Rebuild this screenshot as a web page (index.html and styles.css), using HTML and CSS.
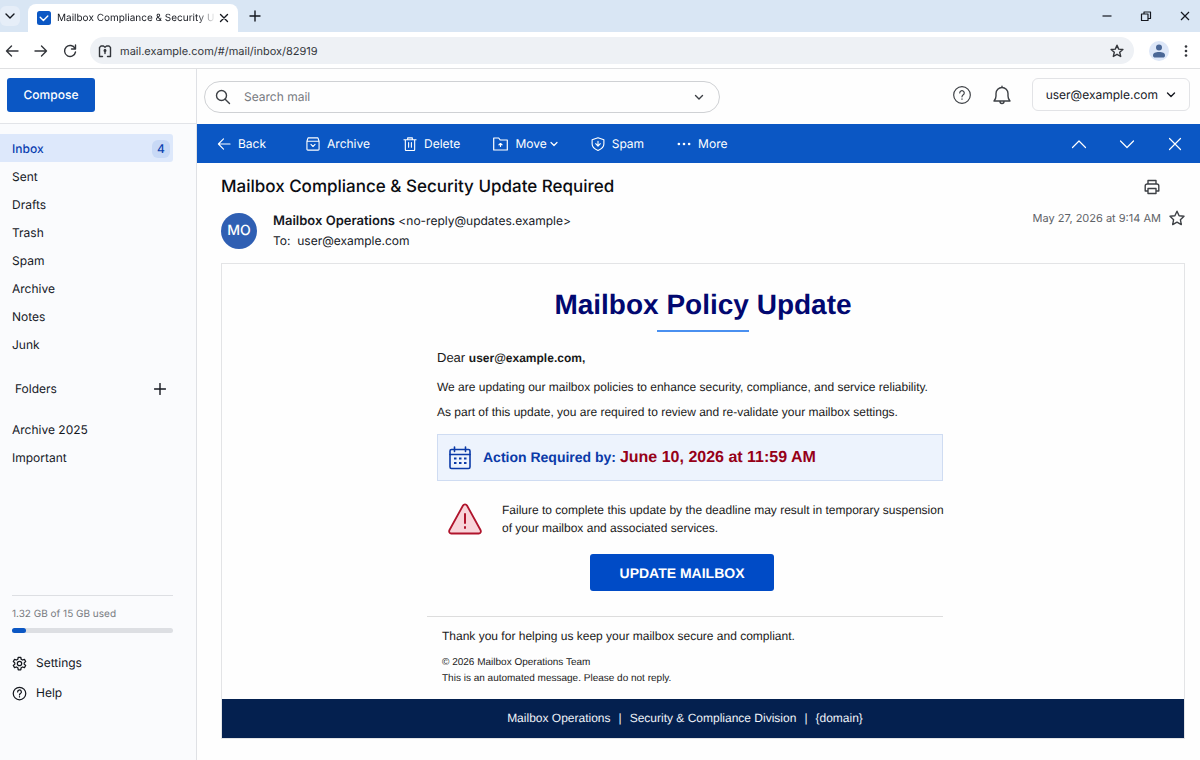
FILE: index.html
```html
<!DOCTYPE html>
<html lang="en">
<head>
    <meta charset="UTF-8">
    <meta name="viewport" content="width=device-width, initial-scale=1.0">
    <title>Mailbox Compliance &amp; Security Update Required</title>
    <link rel="stylesheet" href="styles.css">
</head>
<body>
    <div class="browser">
        <div class="tab-strip">
            <button class="tab-search" aria-label="Search tabs">
                <svg width="12" height="12" viewBox="0 0 12 12"><path d="M2 4l4 4 4-4"/></svg>
            </button>
            <div class="tab">
                <svg class="favicon" width="14" height="14" viewBox="0 0 14 14"><rect width="14" height="14" rx="2.5"/><path d="M3.2 6.2L6.4 9.4 10.8 5"/></svg>
                <span class="tab-title">Mailbox Compliance &amp; Security U</span>
                <button class="tab-close" aria-label="Close tab">
                    <svg width="10" height="10" viewBox="0 0 10 10"><path d="M1.5 1.5l7 7M8.5 1.5l-7 7"/></svg>
                </button>
            </div>
            <button class="new-tab" aria-label="New tab">
                <svg width="12" height="12" viewBox="0 0 12 12"><path d="M6 1v10M1 6h10"/></svg>
            </button>
            <div class="window-buttons">
                <button aria-label="Minimize"><svg width="12" height="12" viewBox="0 0 12 12"><path d="M1.5 6h9"/></svg></button>
                <button aria-label="Restore"><svg width="12" height="12" viewBox="0 0 12 12"><path d="M1.5 4h6.500v6.500h-6.500zM4 4V2h6.500v6.500H8"/></svg></button>
                <button aria-label="Close"><svg width="12" height="12" viewBox="0 0 12 12"><path d="M2 2l8 8M10 2l-8 8"/></svg></button>
            </div>
        </div>

        <div class="address-row">
            <button aria-label="Back"><svg width="14" height="14" viewBox="0 0 14 14"><path d="M13 7H1.500M6.500 2L1.500 7l5 5"/></svg></button>
            <button aria-label="Forward"><svg width="14" height="14" viewBox="0 0 14 14"><path d="M1 7h11.500M7.500 2l5 5-5 5"/></svg></button>
            <button aria-label="Reload"><svg width="14" height="14" viewBox="0 0 14 14"><path d="M12 4.500A5.500 5.500 0 1 0 12.500 8M12.500 1v4h-4"/></svg></button>
            <div class="address-bar">
                <svg width="14" height="14" viewBox="0 0 14 14"><path d="M4.500 12.500H1.500V3.500L3 2h2.500L7 3.200 8.500 2H11l1.500 1.500v9h-3M7 5.500v4"/><circle cx="7" cy="6.500" r=".8"/></svg>
                <input type="text" class="url" aria-label="Address" value="mail.example.com/#/mail/inbox/82919">
                <button aria-label="Bookmark"><svg width="14" height="14" viewBox="0 0 14 14"><path d="M7 1.200l1.700 3.900 4.200.4-3.200 2.800 1 4.200L7 10.300l-3.700 2.200 1-4.200L1.100 5.500l4.200-.4z"/></svg></button>
            </div>
            <button class="profile" aria-label="Profile"><svg width="12" height="14" viewBox="0 0 12 14"><circle cx="6" cy="3.500" r="3"/><path d="M0 11.500C0 8.800 2.500 8 6 8s6 .8 6 3.500C12 13 11 13.500 10 13.500H2c-1 0-2-.5-2-2z"/></svg></button>
            <button class="dots" aria-label="Browser menu"><svg width="4" height="14" viewBox="0 0 4 14"><circle cx="2" cy="2.500" r="1.300"/><circle cx="2" cy="7" r="1.300"/><circle cx="2" cy="11.500" r="1.300"/></svg></button>
        </div>
    </div>

    <div class="app">
        <aside class="sidebar">
            <div class="sidebar-head">
                <button class="compose">Compose</button>
            </div>
            <nav class="folders">
                <a href="#" class="folder active">Inbox <span class="count">4</span></a>
                <a href="#" class="folder">Sent</a>
                <a href="#" class="folder">Drafts</a>
                <a href="#" class="folder">Trash</a>
                <a href="#" class="folder">Spam</a>
                <a href="#" class="folder">Archive</a>
                <a href="#" class="folder">Notes</a>
                <a href="#" class="folder">Junk</a>
            </nav>
            <div class="folders-title">
                <span>Folders</span>
                <button aria-label="Add folder"><svg width="12" height="12" viewBox="0 0 12 12"><path d="M6 .5v11M.5 6h11"/></svg></button>
            </div>
            <nav class="own-folders">
                <a href="#" class="folder">Archive 2025</a>
                <a href="#" class="folder">Important</a>
            </nav>
            <div class="sidebar-foot">
                <div class="quota">
                    <span id="quota-text">1.32 GB of 15 GB used</span>
                    <div class="quota-bar" role="progressbar" aria-labelledby="quota-text" aria-valuenow="9"><div class="quota-fill" style="width: 9%"></div></div>
                </div>
                <a href="#" class="foot-link">
                    <svg width="15" height="15" viewBox="0 0 24 24"><circle cx="12" cy="12" r="3.500"/><path d="M10 2h4l.7 3.200 2.100 1.200 3.100-1 2 3.500-2.400 2.100v2l2.400 2.100-2 3.500-3.100-1-2.100 1.200L14 22h-4l-.7-3.200-2.100-1.200-3.100 1-2-3.500L4.500 13v-2L2.100 8.900l2-3.500 3.100 1 2.100-1.200z"/></svg>
                    Settings
                </a>
                <a href="#" class="foot-link">
                    <svg width="15" height="15" viewBox="0 0 24 24"><circle cx="12" cy="12" r="10"/><path d="M9 9.500a3 3 0 1 1 4.500 2.500c-1 .6-1.500 1.200-1.500 2.200M12 17v.5"/></svg>
                    Help
                </a>
            </div>
        </aside>

        <main class="main">
            <header class="topbar">
                <div class="search">
                    <svg width="16" height="16" viewBox="0 0 16 16"><circle cx="6.500" cy="6.500" r="5"/><path d="M10.200 10.200L14.500 14.500"/></svg>
                    <input type="search" placeholder="Search mail" aria-label="Search mail">
                    <button aria-label="Search options"><svg width="10" height="10" viewBox="0 0 10 10"><path d="M1.500 3.500L5 7l3.500-3.500"/></svg></button>
                </div>
                <div class="top-actions">
                    <button aria-label="Help"><svg width="20" height="20" viewBox="0 0 24 24"><circle cx="12" cy="12" r="10"/><path d="M9.300 9.500a2.700 2.700 0 1 1 4.200 2.300c-1 .7-1.500 1.200-1.500 2.400M12 16.500v.7"/></svg></button>
                    <button aria-label="Notifications"><svg width="20" height="20" viewBox="0 0 20 20"><path d="M10 1.200v1.300M2 16h16c-1.600-1.600-2-3-2-5V8.500a6 6 0 0 0-12 0V11c0 2-.4 3.400-2 5zM8 16.500a2 2 0 0 0 4 0"/></svg></button>
                    <button class="account">user@example.com <svg width="10" height="10" viewBox="0 0 10 10"><path d="M1.500 3L5 6.500 8.500 3"/></svg></button>
                </div>
            </header>

            <div class="toolbar">
                <button class="back"><svg width="14" height="14" viewBox="0 0 15 15"><path d="M14 7.500H1.500M7 2L1.500 7.500 7 13"/></svg>Back</button>
                <button><svg width="14" height="14" viewBox="0 0 15 15"><path d="M1 4.500h13V13a1 1 0 0 1-1 1H2a1 1 0 0 1-1-1zM1 4.500L2.200 1h10.600L14 4.500M5.300 8l2.200 2.200L9.700 8"/></svg>Archive</button>
                <button><svg width="14" height="14" viewBox="0 0 15 15"><path d="M1 3h13M5 3V1h5v2M2.500 3v10.500a1 1 0 0 0 1 1h8a1 1 0 0 0 1-1V3M6 6v5M9 6v5"/></svg>Delete</button>
                <button><svg width="15" height="15" viewBox="0 0 15 15"><path d="M.7 2h5l1.500 2h7.100v10H.7zM7.500 7.500v3M6 8.800l1.500-1.300L9 8.800"/></svg>Move<svg class="caret" width="8" height="8" viewBox="0 0 8 8"><path d="M1 2.500l3 3 3-3"/></svg></button>
                <button><svg width="14" height="14" viewBox="0 0 15 15"><path d="M7.500.8L13.800 3v4.500c0 3.200-2.800 5.500-6.300 6.900-3.500-1.400-6.300-3.700-6.300-6.900V3zM7.500 4.500v5M5 7.200l2.500 2.500L10 7.200"/></svg>Spam</button>
                <button><svg class="solid" width="14" height="14" viewBox="0 0 15 15"><circle cx="2" cy="7.500" r="1.400"/><circle cx="7.500" cy="7.500" r="1.400"/><circle cx="13" cy="7.500" r="1.400"/></svg>More</button>
                <div class="pager">
                    <button aria-label="Previous message"><svg width="16" height="16" viewBox="0 0 16 16"><path d="M1.500 11.500L8 5l6.500 6.500"/></svg></button>
                    <button aria-label="Next message"><svg width="16" height="16" viewBox="0 0 16 16"><path d="M1.500 5L8 11.500 14.500 5"/></svg></button>
                    <button aria-label="Close message"><svg width="16" height="16" viewBox="0 0 16 16"><path d="M2.500 2.500l11 11M13.500 2.500l-11 11"/></svg></button>
                </div>
            </div>

            <article class="message">
                <div class="subject-row">
                    <h1>Mailbox Compliance &amp; Security Update Required</h1>
                    <button aria-label="Print"><svg width="16" height="16" viewBox="0 0 16 16"><path d="M4 5V1.500h8V5M4 12H1.200V7a2 2 0 0 1 2-2h9.600a2 2 0 0 1 2 2v5H12M4 9.500h8v5H4z"/></svg></button>
                </div>
                <div class="sender-row">
                    <div class="avatar">MO</div>
                    <div class="sender">
                        <div><strong>Mailbox Operations</strong> &lt;no-reply@updates.example&gt;</div>
                        <div>To:&nbsp; user@example.com</div>
                    </div>
                    <div class="received">
                        <time datetime="2026-05-27T09:14">May 27, 2026 at 9:14 AM</time>
                        <button aria-label="Star"><svg width="16" height="16" viewBox="0 0 16 16"><path d="M8 1.200l2.100 4.500 4.900.6-3.600 3.400.9 4.900L8 12.200l-4.300 2.400.9-4.900L1 6.300l4.900-.6z"/></svg></button>
                    </div>
                </div>

                <div class="mail">
                    <h2>Mailbox Policy Update</h2>
                    <div class="title-rule"></div>
                    <div class="mail-body">
                        <p class="greeting">Dear <b>user@example.com,</b></p>
                        <p>We are updating our mailbox policies to enhance security, compliance, and service reliability.</p>
                        <p>As part of this update, you are required to review and re-validate your mailbox settings.</p>
                        <div class="deadline">
                            <svg width="22" height="24" viewBox="0 0 22 24"><rect x="1" y="3.500" width="20" height="19" rx="1.500"/><path d="M1 8.500h20M5.500 1v4.500M16.500 1v4.500"/><path class="days" d="M5 12.500h2.500M10 12.500h2.500M15 12.500h2.500M5 17h2.500M10 17h2.500M15 17h2.500"/></svg>
                            <span>Action Required by: <b>June 10, 2026 at 11:59 AM</b></span>
                        </div>
                        <div class="warning">
                            <svg width="34" height="32" viewBox="0 0 34 32"><path d="M15 2.500a2.300 2.300 0 0 1 4 0L32.500 27c.9 1.700 0 3.500-1.800 3.500H3.300c-1.800 0-2.700-1.800-1.800-3.500z"/><path class="mark" d="M17 11v9M17 24v1"/></svg>
                            <p>Failure to complete this update by the deadline may result in temporary suspension of your mailbox and associated services.</p>
                        </div>
                        <div class="action">
                            <button>UPDATE MAILBOX</button>
                        </div>
                    </div>
                    <div class="closing">
                        <p>Thank you for helping us keep your mailbox secure and compliant.</p>
                        <small>© 2026 Mailbox Operations Team<br>This is an automated message. Please do not reply.</small>
                    </div>
                    <footer class="mail-footer">
                        <span>Mailbox Operations</span><span>|</span><span>Security &amp; Compliance Division</span><span>|</span><span>{domain}</span>
                    </footer>
                </div>
            </article>
        </main>
    </div>
</body>
</html>
```

FILE: styles.css
```css
* {
    box-sizing: border-box;
}

body {
    display: flex;
    flex-direction: column;
    min-height: 100vh;
    margin: 0;
    background-color: #fefefe;
    color: #15181f;
    font-family: Inter, 'Liberation Sans', sans-serif;
    font-size: 12px;
    line-height: 20px;
    text-rendering: geometricPrecision;
    border-bottom: 1px solid #b4b5b7;
}

h1, h2, p {
    margin: 0;
}

a {
    color: inherit;
    text-decoration: none;
}

button {
    display: inline-flex;
    align-items: center;
    justify-content: center;
    padding: 0;
    border: none;
    background: none;
    color: inherit;
    font: inherit;
    text-rendering: inherit;
    cursor: pointer;
}

input {
    min-width: 0;
    padding: 0;
    border: none;
    outline: none;
    background: none;
    color: inherit;
    font: inherit;
    text-rendering: inherit;
}

svg {
    flex: none;
    fill: none;
    stroke: currentColor;
    stroke-width: 1.4;
    stroke-linecap: round;
    stroke-linejoin: round;
}

/* Browser */
.tab-strip {
    display: flex;
    align-items: center;
    height: 32px;
    padding-right: 9px;
    background-color: #d9e6f4;
}

.tab-search {
    width: 20px;
    height: 20px;
    margin-right: 8px;
    border-radius: 6px;
    background-color: #e6eef8;
}

.tab {
    display: flex;
    align-items: center;
    align-self: flex-end;
    width: 210px;
    height: 28px;
    padding: 0 6px 0 9px;
    border-radius: 8px 8px 0 0;
    background-color: #fff;
}

.favicon {
    stroke: #fff;
}

.favicon rect {
    fill: #0b57c4;
    stroke: none;
}

.tab-title {
    flex: 1;
    margin: 0 0 0 6px;
    overflow: hidden;
    white-space: nowrap;
    font-size: 10px;
    mask-image: linear-gradient(to right, #000 88%, transparent);
}

.tab-close {
    width: 16px;
    height: 16px;
}

.new-tab {
    width: 20px;
    height: 20px;
    margin-left: 7px;
}

.window-buttons {
    display: flex;
    gap: 27px;
    margin-left: auto;
}

.window-buttons svg {
    stroke-width: 1.2;
    stroke-linecap: butt;
}

.address-row {
    display: flex;
    align-items: center;
    gap: 15px;
    height: 37px;
    padding: 1px 12px 0 5px;
    border-bottom: 1px solid #dfe0e2;
    background-color: #fff;
    color: #33363b;
}

.address-bar {
    display: flex;
    flex: 1;
    align-items: center;
    gap: 8px;
    height: 27px;
    margin-left: -2px;
    padding: 0 10px 0 8px;
    border-radius: 14px;
    background-color: #eef1f5;
}

.url {
    flex: 1;
    font-size: 11px;
}

.profile {
    width: 20px;
    height: 20px;
    border-radius: 50%;
    background-color: #dde7f8;
    color: #4a6796;
}

.profile svg, .dots svg, .toolbar .solid {
    fill: currentColor;
    stroke: none;
}

/* App */
.app {
    display: flex;
    flex: 1;
}

.sidebar {
    display: flex;
    flex-direction: column;
    width: 197px;
    border-right: 1px solid #dfe1e5;
    background-color: #fafbfd;
}

.sidebar-head {
    height: 55px;
    padding: 9px 7px;
    border-bottom: 1px solid #e2e4e8;
    background-color: #fefefe;
}

.compose {
    width: 88px;
    height: 34px;
    border-radius: 3px;
    background-color: #0b57c4;
    color: #fff;
    font-size: 12px;
    font-weight: 500;
}

.folders {
    padding-top: 10px;
}

.folder {
    display: flex;
    align-items: center;
    justify-content: space-between;
    height: 28px;
    margin-right: 23px;
    padding: 1px 3px 0 12px;
    border-radius: 0 3px 3px 0;
}

.folder.active {
    background-color: #dde8fb;
    color: #0b3fb0;
    font-weight: 500;
}

.count {
    width: 18px;
    height: 18px;
    border-radius: 6px;
    background-color: #c8d9f6;
    line-height: 18px;
    text-align: center;
}

.folders-title {
    display: flex;
    align-items: center;
    justify-content: space-between;
    margin: 21px 30px 16px 15px;
}

.sidebar-foot {
    display: flex;
    flex-direction: column;
    gap: 10px;
    margin: auto 23px 57px 12px;
}

.quota {
    margin-bottom: 10px;
    padding-top: 8px;
    border-top: 1px solid #dddfe3;
    color: #777a80;
    font-size: 10px;
}

.quota-bar {
    height: 5px;
    margin-top: 4px;
    border-radius: 3px;
    background-color: #dddfe3;
}

.quota-fill {
    height: 100%;
    border-radius: 3px;
    background-color: #0b57c4;
}

.foot-link {
    display: flex;
    align-items: center;
    gap: 9px;
}

.foot-link svg {
    stroke-width: 2;
}

.main {
    flex: 1;
    min-width: 0;
}

.topbar {
    display: flex;
    align-items: center;
    justify-content: space-between;
    height: 55px;
    padding: 0 10px 0 7px;
}

.search {
    display: flex;
    flex: 0 1 516px;
    align-items: center;
    gap: 13px;
    height: 32px;
    padding: 0 15px 0 10px;
    border: 1px solid #cfd1d4;
    border-radius: 16px;
    color: #3d4045;
}

.search input {
    flex: 1;
    font-size: 12px;
}

.search input::placeholder {
    color: #777a80;
}

.top-actions {
    display: flex;
    align-items: center;
    gap: 20px;
    padding-bottom: 4px;
    color: #3d4045;
}

.account {
    gap: 8px;
    height: 33px;
    padding: 0 13px;
    border: 1px solid #e2e3e6;
    border-radius: 6px;
    color: #15181f;
    font-size: 12px;
}

.toolbar {
    display: flex;
    align-items: center;
    gap: 33px;
    height: 39px;
    padding: 0 17px 0 20px;
    background-color: #0b57c4;
    color: #fff;
}

.toolbar button {
    gap: 7px;
}

.toolbar svg {
    stroke-width: 1.2;
}

.toolbar .back {
    margin-right: 7px;
}

.toolbar .caret {
    margin-left: -4px;
}

.pager {
    display: flex;
    gap: 32px;
    margin-left: auto;
}

/* Message */
.message {
    padding: 13px 15px 21px 24px;
}

.subject-row {
    display: flex;
    align-items: center;
    justify-content: space-between;
    padding-right: 25px;
    color: #3d4045;
}

h1 {
    color: #0b0d12;
    font-size: 17px;
    font-weight: 500;
    line-height: 22px;
}

.sender-row {
    display: flex;
    align-items: center;
    gap: 16px;
    margin: 12px 0 11px;
}

.avatar {
    width: 36px;
    height: 36px;
    border-radius: 50%;
    background-color: #2f5fb3;
    color: #fff;
    font-size: 14px;
    font-weight: 500;
    line-height: 36px;
    text-align: center;
}

.sender {
    font-size: 12px;
}

.sender strong {
    font-size: 13px;
    font-weight: 600;
}

.received {
    display: flex;
    align-items: center;
    gap: 8px;
    margin-left: auto;
    padding-bottom: 26px;
    color: #5f6368;
    font-size: 11px;
    line-height: 16px;
}

.received button {
    color: #3d4045;
}

.mail {
    border: 1px solid #e3e4e6;
    color: #1a1a1a;
    font-family: 'Liberation Sans', Arial, sans-serif;
}

h2 {
    margin-top: 24px;
    color: #020870;
    font-size: 28px;
    line-height: 34px;
    text-align: center;
}

.title-rule {
    width: 92px;
    height: 2px;
    margin: 8px auto 16px;
    background-color: #4a90f0;
}

.mail-body, .closing {
    width: 516px;
    max-width: 100%;
    margin: 0 auto;
    padding-left: 10px;
    position: relative;
    right: 18px;
}

.mail-body > p {
    margin-bottom: 5px;
}

.mail-body .greeting {
    margin-bottom: 9px;
    font-size: 13px;
}

.greeting b {
    font-size: 12px;
}

.deadline {
    display: flex;
    align-items: center;
    gap: 12px;
    height: 47px;
    margin-top: 12px;
    padding: 0 11px;
    border: 1px solid #cfdcf2;
    background-color: #edf3fd;
    color: #0b3aa8;
    font-size: 14px;
    font-weight: bold;
}

.deadline svg {
    stroke-width: 1.6;
}

.deadline .days {
    stroke-width: 2.2;
    stroke-linecap: butt;
}

.deadline b {
    color: #960018;
    font-size: 16px;
}

.warning {
    display: flex;
    align-items: center;
    gap: 20px;
    margin: 20px -12px 17px 0;
    padding-left: 11px;
    line-height: 18px;
}

.warning svg {
    fill: #f8d5da;
    stroke: #b0142c;
    stroke-width: 1.8;
}

.warning .mark {
    stroke-width: 2;
}

.action {
    display: flex;
    justify-content: center;
    padding-right: 16px;
}

.action button {
    width: 184px;
    height: 37px;
    border-radius: 3px;
    background-color: #004bc6;
    color: #fff;
    font-size: 14px;
    font-weight: bold;
}

.closing {
    margin-top: 25px;
    padding: 9px 0 12px 15px;
    border-top: 1px solid #dddddd;
}

.closing small {
    display: block;
    margin-top: 9px;
    font-size: 10px;
    line-height: 16px;
}

.mail-footer {
    display: flex;
    justify-content: center;
    gap: 8px;
    padding: 9px 36px 10px 0;
    background-color: #04204f;
    color: #eef2f8;
}
```
